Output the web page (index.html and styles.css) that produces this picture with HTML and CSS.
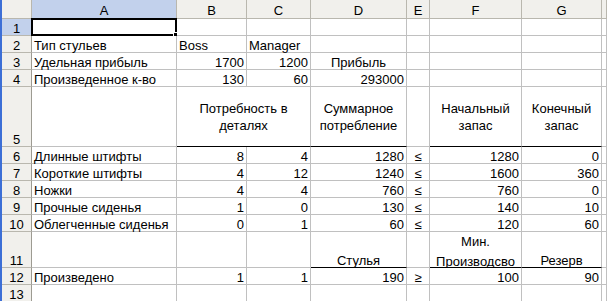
FILE: index.html
```
<!DOCTYPE html>
<html>
<head>
<meta charset="utf-8">
<link rel="stylesheet" href="styles.css">
</head>
<body>
<div class="frame">
  <div class="edge"></div>
  <div class="sheet">
    <div class="h corner"></div>
    <div class="h ch sel">A</div>
    <div class="h ch">B</div>
    <div class="h ch">C</div>
    <div class="h ch">D</div>
    <div class="h ch">E</div>
    <div class="h ch">F</div>
    <div class="h ch">G</div>
    <div class="h ch last"></div>

    <div class="h rh sel">1</div>
    <div class="c active"><span class="cursor"></span><span class="handle"></span></div>
    <div class="c"></div><div class="c"></div><div class="c"></div><div class="c"></div><div class="c"></div><div class="c"></div><div class="c"></div>

    <div class="h rh">2</div>
    <div class="c">Тип стульев</div>
    <div class="c">Boss</div>
    <div class="c">Manager</div>
    <div class="c"></div><div class="c"></div><div class="c"></div><div class="c"></div><div class="c"></div>

    <div class="h rh">3</div>
    <div class="c">Удельная прибыль</div>
    <div class="c r">1700</div>
    <div class="c r">1200</div>
    <div class="c m">Прибыль</div>
    <div class="c"></div><div class="c"></div><div class="c"></div><div class="c"></div>

    <div class="h rh">4</div>
    <div class="c">Произведенное к-во</div>
    <div class="c r">130</div>
    <div class="c r">60</div>
    <div class="c r">293000</div>
    <div class="c"></div><div class="c"></div><div class="c"></div><div class="c"></div>

    <div class="h rh">5</div>
    <div class="c"></div>
    <div class="c w tb span2">Потребность в<br>деталях</div>
    <div class="c w tb">Суммарное<br>потребление</div>
    <div class="c"></div>
    <div class="c w tb">Начальный<br>запас</div>
    <div class="c w tb">Конечный<br>запас</div>
    <div class="c"></div>

    <div class="h rh">6</div>
    <div class="c">Длинные штифты</div>
    <div class="c r">8</div>
    <div class="c r">4</div>
    <div class="c r">1280</div>
    <div class="c m">≤</div>
    <div class="c r">1280</div>
    <div class="c r">0</div>
    <div class="c"></div>

    <div class="h rh">7</div>
    <div class="c">Короткие штифты</div>
    <div class="c r">4</div>
    <div class="c r">12</div>
    <div class="c r">1240</div>
    <div class="c m">≤</div>
    <div class="c r">1600</div>
    <div class="c r">360</div>
    <div class="c"></div>

    <div class="h rh">8</div>
    <div class="c">Ножки</div>
    <div class="c r">4</div>
    <div class="c r">4</div>
    <div class="c r">760</div>
    <div class="c m">≤</div>
    <div class="c r">760</div>
    <div class="c r">0</div>
    <div class="c"></div>

    <div class="h rh">9</div>
    <div class="c">Прочные сиденья</div>
    <div class="c r">1</div>
    <div class="c r">0</div>
    <div class="c r">130</div>
    <div class="c m">≤</div>
    <div class="c r">140</div>
    <div class="c r">10</div>
    <div class="c"></div>

    <div class="h rh">10</div>
    <div class="c">Облегченные сиденья</div>
    <div class="c r">0</div>
    <div class="c r">1</div>
    <div class="c r">60</div>
    <div class="c m">≤</div>
    <div class="c r">120</div>
    <div class="c r">60</div>
    <div class="c"></div>

    <div class="h rh">11</div>
    <div class="c"></div>
    <div class="c"></div>
    <div class="c"></div>
    <div class="c m tb">Стулья</div>
    <div class="c"></div>
    <div class="c m tb two">Мин.<br>Производсво</div>
    <div class="c m tb">Резерв</div>
    <div class="c"></div>

    <div class="h rh">12</div>
    <div class="c">Произведено</div>
    <div class="c r">1</div>
    <div class="c r">1</div>
    <div class="c r">190</div>
    <div class="c m">≥</div>
    <div class="c r">100</div>
    <div class="c r">90</div>
    <div class="c"></div>

    <div class="h rh">13</div>
    <div class="c"></div><div class="c"></div><div class="c"></div><div class="c"></div><div class="c"></div><div class="c"></div><div class="c"></div><div class="c"></div>

    <div class="h rh"></div>
    <div class="c"></div><div class="c"></div><div class="c"></div><div class="c"></div><div class="c"></div><div class="c"></div><div class="c"></div><div class="c"></div>
  </div>
</div>
</body>
</html>
```
FILE: styles.css
```
html, body {
  margin: 0;
  padding: 0;
  background: #ffffff;
  overflow: hidden;
}

.frame {
  display: flex;
  height: 301px;
  overflow: hidden;
}

.edge {
  width: 2px;
  flex: none;
  background: #3d6fd6;
}

.sheet {
  flex: 1;
  display: grid;
  grid-template-columns: 30px 145px 70px 64px 96px 23px 92px 80px 1fr;
  grid-template-rows: 19px 17px 17px 17px 17px 60px 17px 17px 17px 17px 17px 36px 17px 17px 17px;
  font-family: "Liberation Sans", Arial, sans-serif;
  font-size: 13px;
  line-height: 13px;
  color: #000000;
}

.c {
  position: relative;
  display: flex;
  align-items: flex-end;
  justify-content: flex-start;
  padding: 0 2px;
  border-right: 1px solid #c0c0c0;
  border-bottom: 1px solid #c0c0c0;
  background: #ffffff;
  white-space: nowrap;
  min-width: 0;
}

.r { justify-content: flex-end; }
.m { justify-content: center; }

.w {
  align-items: center;
  justify-content: center;
  text-align: center;
  line-height: 17px;
}

.two {
  align-items: flex-start;
  text-align: center;
  line-height: 20px;
}

.span2 { grid-column: span 2; }

.tb { border-bottom-color: #000000; }

.h {
  display: flex;
  align-items: flex-end;
  justify-content: center;
  background: #f1f0ec;
  border-right: 1px solid #b9b7ae;
  border-bottom: 1px solid #b9b7ae;
  color: #000000;
}

.ch {
  padding-bottom: 1px;
}

.corner {
  background: #f1f0ec;
}

.rh {
  border-right-color: #9d9b92;
}

.h.sel {
  background: #c2d1ec;
}

.ch.sel {
  border-bottom-color: #5f7fbf;
}

.rh.sel {
  border-right-color: #5f7fbf;
}

.cursor {
  position: absolute;
  left: -1px;
  top: -1px;
  right: -1px;
  bottom: -1px;
  border: 2px solid #000000;
}

.handle {
  position: absolute;
  right: -3px;
  bottom: -3px;
  width: 5px;
  height: 5px;
  background: #000000;
  outline: 1px solid #ffffff;
}
```
